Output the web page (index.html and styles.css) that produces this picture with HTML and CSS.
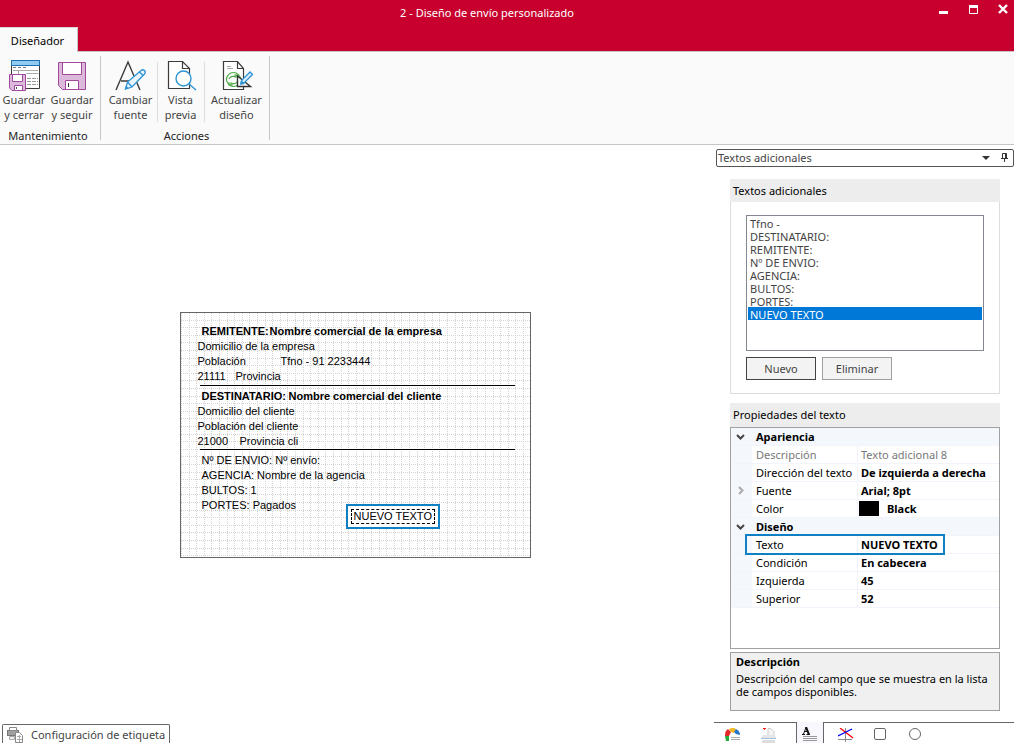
FILE: index.html
```html
<!DOCTYPE html>
<html lang="es">
<head>
<meta charset="utf-8">
<title>2 - Diseño de envío personalizado</title>
<link rel="stylesheet" href="styles.css">
</head>
<body>
<header class="titlebar">
  <h1 class="title">2 - Diseño de envío personalizado</h1>
  <div class="window-buttons">
    <button type="button" aria-label="Minimizar"><svg width="10" height="10"><path d="M0 6h9v3H0z" fill="#fff"/></svg></button>
    <button type="button" aria-label="Maximizar"><svg width="10" height="10"><path d="M.5.5h8v8h-8z" fill="none" stroke="#fff"/><path d="M0 0h9v3H0z" fill="#fff"/></svg></button>
    <button type="button" aria-label="Cerrar"><svg width="10" height="10"><path d="M0 0l8 8M8 0L0 8" stroke="#fff" stroke-width="2.4"/></svg></button>
  </div>
  <button type="button" class="ribbon-tab">Diseñador</button>
</header>

<nav class="ribbon">
  <section class="group">
    <div class="tools">
      <button type="button" class="tool narrow">
        <svg width="32" height="32" viewBox="0 0 32 32"><path d="M3.500 1.500h28v28h-28z" fill="#fff" stroke="#3b3b3b"/><path d="M3.500 1.500h28v5h-28z" fill="#92c9ef" stroke="#1b6fb3"/><path d="M5 8.500h3m2 0h3m2 0h3" stroke="#777"/><path d="M5 11.500h25M10.500 12v4m8-1.500h12" stroke="#aaa"/><path d="M19 19.500h4m1 0h4m1 0h1M19 22.500h4m1 0h4m1 0h1M19 25.500h4m1 0h4m1 0h1" stroke="#999"/><path d="M1.500 15.500h16v16H4l-2.500-2.500z" fill="#dcb9da" stroke="#a04a9e"/><path d="M4.500 15.500h10v7h-10zM6.500 26.500h8v5h-8z" fill="#fff" stroke="#a04a9e"/><path d="M8.500 28v2" stroke="#555"/></svg>
        <span>Guardar<br>y cerrar</span></button>
      <button type="button" class="tool narrow">
        <svg width="32" height="32" viewBox="0 0 32 32"><path d="M2.500 3.500h27v27H6.500l-4-4z" fill="#dcb9da" stroke="#a04a9e"/><path d="M6.500 3.500h19v12h-19zM9.500 21.500h13v9h-13z" fill="#fff" stroke="#a04a9e"/><path d="M12.500 24v4" stroke="#333"/></svg>
        <span>Guardar<br>y seguir</span></button>
    </div>
    <h2 class="group-name">Mantenimiento</h2>
  </section>
  <section class="group">
    <div class="tools">
      <button type="button" class="tool mid">
        <svg width="32" height="32" viewBox="0 0 32 32"><path d="M1 31L13 3 25 31M6 22h16" fill="none" stroke="#3b3b3b" stroke-width="1.400"/><path d="M10.500 30l2-7L26 11.500q2-1.500 3.500 0t0 3.500L17 28zM12.500 23l4.500 5M24.500 13l3.500 3.500" fill="#e8f4fc" stroke="#2e93d4" stroke-width="1.300"/><path d="M10 30.500l1-4 3 3z" fill="#2e93d4"/></svg>
        <span>Cambiar<br>fuente</span></button>
      <button type="button" class="tool short">
        <svg width="32" height="32" viewBox="0 0 32 32"><path d="M3.500 2.500h14l7 7v20h-21z" fill="#fff" stroke="#3b3b3b" stroke-width="1.200"/><path d="M17.500 2.500v7h7" fill="none" stroke="#3b3b3b" stroke-width="1.200"/><circle cx="18.500" cy="19.500" r="7.500" fill="#fff" stroke="#2e93d4" stroke-width="1.400"/><path d="M24 25l7 6" stroke="#2e93d4" stroke-width="1.400"/></svg>
        <span>Vista<br>previa</span></button>
      <button type="button" class="tool wide">
        <svg width="32" height="32" viewBox="0 0 32 32"><path d="M2.500 2.500h14l6 7v21h-20z" fill="#fff" stroke="#3b3b3b" stroke-width="1.200"/><path d="M16.500 2.500v7h6" fill="none" stroke="#3b3b3b" stroke-width="1.200"/><path d="M6 7.500h4M6 9.500h6" stroke="#aaa"/><circle cx="12.500" cy="20.500" r="7" fill="#fff" stroke="#4dab45" stroke-width="1.200"/><path d="M8 20q2-4 7-2v-2.500M17 21q-1 5-7 3v3M8 23v3h4M17 19v-3h-4" fill="none" stroke="#4dab45" stroke-width="1.200"/><path d="M16.500 17v10.500h13z" fill="#fff" stroke="#333" stroke-width="1.400"/><path d="M20 24l1-3 8-8 2.500 2.500-8 8z" fill="#d8edfa" stroke="#2e93d4" stroke-width="1.300"/><path d="M19 26l1-5 4 4z" fill="#2e93d4"/></svg>
        <span>Actualizar<br>diseño</span></button>
    </div>
    <h2 class="group-name">Acciones</h2>
  </section>
</nav>

<main class="workspace">
  <section class="designer">
    <div class="stage">
      <div class="label">
        <svg class="grid" aria-hidden="true"><defs><pattern id="dots" width="38" height="38" patternUnits="userSpaceOnUse"><path d="M8.500 0v38M15.500 0v38M23.500 0v38M30.500 0v38M.5 0v38M0 7.500h38M0 14.500h38M0 22.500h38M0 29.500h38M0 37.500h38" stroke="#d4d4d4" stroke-dasharray="1 1"/></pattern></defs><rect width="100%" height="100%" fill="url(#dots)"/></svg>
        <div class="block first">
          <p class="strong indent"><span class="key-sender">REMITENTE:</span><span>Nombre comercial de la empresa</span></p>
          <p>Domicilio de la empresa</p>
          <p><span class="city">Población</span><span>Tfno - 91 2233444</span></p>
          <p><span class="zip">21111</span><span>Provincia</span></p>
        </div>
        <div class="block">
          <p class="strong indent"><span class="key-receiver">DESTINATARIO:</span><span>Nombre comercial del cliente</span></p>
          <p>Domicilio del cliente</p>
          <p>Población del cliente</p>
          <p><span class="zip-client">21000</span><span>Provincia cli</span></p>
        </div>
        <div class="block last">
          <p class="indent">Nº DE ENVIO: Nº envío:</p>
          <p class="indent">AGENCIA: Nombre de la agencia</p>
          <p class="indent">BULTOS: 1</p>
          <p class="indent">PORTES: Pagados</p>
        </div>
        <div class="new-text"><span>NUEVO TEXTO</span></div>
      </div>
    </div>
    <button type="button" class="config-tab">
      <svg width="17" height="16" viewBox="0 0 17 16"><path d="M0 3h12v6H0z" fill="#777"/><path d="M2.500.5h7v3h-7z" fill="#fff" stroke="#888"/><path d="M1 5h10M1 7h10" stroke="#ccc"/><path d="M8.500 5.500h4l3 3v7h-7z" fill="#fff" stroke="#888"/><path d="M10 9.500h4M10 12.500h5M12.500 8v7" stroke="#aaa"/><path d="M2.500 9.500h5v3h-5z" fill="#eee" stroke="#aaa"/></svg>
      <span>Configuración de etiqueta</span>
    </button>
  </section>

  <aside class="side">
    <div class="side-caption">
      <span>Textos adicionales</span>
      <button type="button" aria-label="Opciones"><svg width="8" height="4"><path d="M0 0h8L4 4z" fill="#333"/></svg></button>
      <button type="button" aria-label="Fijar"><svg width="8" height="9"><path d="M1.500 5V.5h4V5M0 5.500h7M3.500 5v4M4.500 1v4" fill="none" stroke="#333"/></svg></button>
    </div>
    <div class="side-body">
      <section class="card">
        <h2 class="card-title"><label for="texts">Textos adicionales</label></h2>
        <div class="card-body">
          <select id="texts" class="list" size="8">
            <option>Tfno -</option><option>DESTINATARIO:</option><option>REMITENTE:</option><option>Nº DE ENVIO:</option><option>AGENCIA:</option><option>BULTOS:</option><option>PORTES:</option><option selected>NUEVO TEXTO</option>
          </select>
          <div class="actions">
            <button type="button" class="btn primary">Nuevo</button>
            <button type="button" class="btn">Eliminar</button>
          </div>
        </div>
      </section>
      <section class="properties">
        <h2 class="card-title">Propiedades del texto</h2>
        <div class="sheet">
          <table>
            <colgroup><col class="c-mark"><col class="c-name"><col></colgroup>
            <tbody>
              <tr class="cat"><td><svg width="9" height="6"><path d="M1 1l3.500 3.500L8 1"/></svg></td><th colspan="2">Apariencia</th></tr>
              <tr class="off"><td></td><th>Descripción</th><td>Texto adicional 8</td></tr>
              <tr><td></td><th>Dirección del texto</th><td>De izquierda a derecha</td></tr>
              <tr><td><svg class="closed" width="6" height="9"><path d="M1 1l3.500 3.500L1 8"/></svg></td><th>Fuente</th><td>Arial; 8pt</td></tr>
              <tr><td></td><th>Color</th><td><span class="swatch-line"><i class="swatch"></i>Black</span></td></tr>
            </tbody>
            <tbody>
              <tr class="cat"><td><svg width="9" height="6"><path d="M1 1l3.500 3.500L8 1"/></svg></td><th colspan="2">Diseño</th></tr>
              <tr><td></td><th class="current">Texto</th><td>NUEVO TEXTO</td></tr>
              <tr><td></td><th>Condición</th><td>En cabecera</td></tr>
              <tr><td></td><th>Izquierda</th><td>45</td></tr>
              <tr><td></td><th>Superior</th><td>52</td></tr>
            </tbody>
          </table>
        </div>
        <div class="help"><strong>Descripción</strong><p>Descripción del campo que se muestra en la lista de campos disponibles.</p></div>
      </section>
    </div>
    <nav class="side-tabs">
      <button type="button" class="gauge" aria-label="Campos"><svg width="16" height="14" viewBox="0 0 16 14"><path d="M0 8h4v5H1z" fill="#25ad3b"/><path d="M0 7q0-4 3-6l3 3-2 4H0z" fill="#e5292b"/><path d="M4 1q4-2 7 0L9 5 6 4z" fill="#f6b51c"/><path d="M11 1q4 2 4 6l-4-1-2-2z" fill="#2275c7"/><path d="M6 9.500h9M6 11.500h9" stroke="#aaa"/></svg></button>
      <button type="button" class="sheet-tab" aria-label="Imágenes"><svg width="16" height="15" viewBox="0 0 16 15"><path d="M2 .5h3M3 1.500h1" stroke="#e22"/><path d="M7 .5h3l3 3V9H7z" fill="#f4f4f4" stroke="#ccc"/><path d="M2 7h12l1 3H0z" fill="#e6e6e6"/><path d="M0 10.500h15" stroke="#9cc3e6"/><path d="M1 12h13v3H1z" fill="#ddd"/></svg></button>
      <button type="button" class="active" aria-label="Textos"><svg width="15" height="15" viewBox="0 0 15 15"><path d="M0 7.500h3M4.500 7.500H8M1.500 7L4 .5 6.500 7M3 4.500h3" stroke="#111" fill="none"/><path d="M4 0l3 7.500" stroke="#111" stroke-width="2"/><path d="M1 9.500h14M1 11.500h14M1 13.500h14" stroke="#999"/></svg></button>
      <button type="button" class="lines" aria-label="Líneas"><svg width="16" height="15" viewBox="0 0 16 15"><path d="M7.500 0v14M0 11.500h14" stroke="#888"/><path d="M2 0l13 10" stroke="#f00" stroke-width="1.300"/><path d="M0 8l14-7" stroke="#00f" stroke-width="1.300"/></svg></button>
      <button type="button" class="shape" aria-label="Rectángulos"><svg width="12" height="12"><rect x=".5" y=".5" width="11" height="11" rx="1.500" fill="none" stroke="#666"/></svg></button>
      <button type="button" class="shape" aria-label="Elipses"><svg width="12" height="12"><circle cx="6" cy="6" r="5.500" fill="none" stroke="#666"/></svg></button>
    </nav>
  </aside>
</main>
</body>
</html>
```
FILE: styles.css
```css
*, *::after { box-sizing: border-box; }

body {
  margin: 0;
  min-height: 100vh;
  display: flex;
  flex-direction: column;
  background: #fff;
  color: #000;
  font: 11px/15px "Noto Sans", "Open Sans", sans-serif;
}

button, select { font: inherit; color: inherit; }
button { margin: 0; padding: 0; border: 0; background: none; }
h1, h2, p { margin: 0; font-size: inherit; font-weight: normal; }
svg { display: block; }

/* Title bar */
.titlebar {
  display: grid;
  grid-template-columns: 80px 1fr 80px;
  grid-template-rows: 27px 24px;
  background: #c8002d;
  border-bottom: 1px solid #c6c6c6;
}
.title { grid-column: 2; text-align: center; color: #fff; padding-top: 5px; padding-right: 40px; }
.window-buttons { grid-column: 3; display: flex; gap: 20px; justify-content: flex-end; padding: 5px 5px 0 0; }
.window-buttons button { height: 10px; }
.window-buttons svg { overflow: visible; }
.ribbon-tab {
  grid-row: 2;
  grid-column: 1;
  width: 78px;
  margin-bottom: -1px;
  padding-right: 2px;
  background: #fafafa;
  border-top: 1px solid #d8d8d8;
  border-right: 1px solid #c6c6c6;
}

/* Ribbon */
.ribbon {
  display: flex;
  height: 93px;
  padding: 4px 0;
  background: #fafafa;
  border-bottom: 1px solid #c6c6c6;
}
.group { display: flex; flex-direction: column; border-right: 1px solid #c6c6c6; }
.group:first-child { padding-right: 4px; }
.group + .group { padding-left: 3px; }
.tools { display: flex; }
.tool { display: flex; flex-direction: column; align-items: center; height: 71px; padding-top: 3px; color: #444; white-space: nowrap; }
.tool span { margin-top: 1px; }
.narrow { width: 48px; }
.mid { width: 53px; }
.short { width: 47px; }
.wide { width: 65px; }
.group + .group .tool + .tool { background: linear-gradient(#ddd, #ddd) 0 6px / 1px 60px no-repeat; }
.group-name { text-align: center; color: #222; line-height: 14px; padding-top: 2px; }

/* Work area */
.workspace { flex: 1; display: grid; grid-template-columns: 1fr 300px; }
.designer { display: flex; flex-direction: column; }
.stage { flex: 1; display: flex; align-items: center; justify-content: center; padding: 1px 4px 0 0; }
.label {
  position: relative;
  width: 351px;
  height: 246px;
  border: 1px solid #666;
  font: 11px/15px "Liberation Sans", Arial, sans-serif;
}
.grid { position: absolute; inset: 0; width: 100%; height: 100%; }
.block { position: relative; margin: 0 15px 0 19px; padding-top: 3px; border-bottom: 1px solid #000; }
.first { padding-top: 11px; padding-bottom: 1px; }
.last { border: 0; }
.block p { display: flex; margin-left: -2px; white-space: nowrap; }
.block .indent { margin-left: 2px; }
.strong { font-weight: bold; }
.key-sender { width: 68px; }
.key-receiver { width: 87px; }
.city { width: 83px; }
.zip { width: 38px; }
.zip-client { width: 42px; }
.new-text {
  position: absolute;
  left: 165px;
  top: 191px;
  padding: 3px;
  border: 2px solid #0f80c3;
  background: #fff;
}
.new-text span { display: block; padding: 0 2px; border: 1px dashed #000; line-height: 13px; white-space: nowrap; }

.config-tab {
  align-self: flex-start;
  display: flex;
  align-items: center;
  gap: 7px;
  height: 19px;
  margin-left: 2px;
  padding: 1px 4px 0;
  border: 1px solid #666;
  border-bottom: 0;
  border-radius: 2px 2px 0 0;
  color: #444;
}

/* Side panel */
.side { display: flex; flex-direction: column; }
.side-caption {
  display: flex;
  align-items: center;
  gap: 11px;
  height: 18px;
  margin: 4px 0 0 2px;
  padding: 0 4px 1px 1px;
  border: 1px solid #555;
  border-radius: 2px;
  color: #444;
}
.side-caption span { flex: 1; }
.side-body { flex: 1; display: flex; flex-direction: column; gap: 9px; padding: 12px 14px 11px 16px; }
.card { border: 1px solid #ddd; border-top: 0; }
.card-title { background: #ededed; height: 23px; padding: 4px 3px; }
.card .card-title { margin: 0 -1px; }
.card-body { padding: 13px 15px; }
.list {
  display: block;
  width: 100%;
  height: 136px;
  padding: 0 1px;
  border: 1px solid #828790;
  border-radius: 0;
  background: #fff;
  color: #444;
  outline: 0;
  overflow: hidden;
}
.list option { height: 13px; min-height: 13px; padding: 0 2px; line-height: 13px; }
.list option:checked { background: #0078d7 linear-gradient(#0078d7, #0078d7); color: #fff; }
.actions { display: flex; gap: 6px; margin-top: 6px; }
.btn { width: 70px; height: 23px; background: #f3f3f3; border: 1px solid #a0a0a0; color: #444; }
.btn.primary { border-color: #444; }

.properties { flex: 1; display: flex; flex-direction: column; }
.properties .card-title { height: 24px; }
.sheet { flex: 1; border: 1px solid #a0a0a0; }
table { width: 100%; border-collapse: separate; border-spacing: 0; table-layout: fixed; }
.c-mark { width: 21px; }
.c-name { width: 105px; }
td, th { height: 18px; padding: 0 3px; line-height: 17px; text-align: left; font-weight: normal; white-space: nowrap; border-bottom: 1px solid #f1f4fa; }
th { padding-left: 4px; }
td:first-child { background: #f4f7fc; padding: 0 5px; }
th + td { font-weight: bold; border-left: 1px solid #f1f4fa; }
.cat th { background: #f4f7fc; font-weight: bold; }
.off th, .off td { color: #777; font-weight: normal; }
td path { fill: none; stroke: #444; stroke-width: 2; }
td .closed { margin-left: 2px; }
.closed path { stroke: #aaa; }
.swatch-line { display: flex; align-items: center; gap: 8px; margin-left: -2px; }
.swatch { width: 20px; height: 15px; background: #000; }
.current { position: relative; }
.current::after { content: ""; position: absolute; left: -7px; top: -2px; width: 200px; height: 21px; border: 2px solid #0f80c3; }

.help { height: 59px; margin-top: 3px; padding: 1px 5px; border: 1px solid #a0a0a0; background: #f0f0f0; line-height: 13px; }
.help strong { display: block; line-height: 15px; }
.help p { margin-top: 3px; }

.side-tabs { display: flex; height: 21px; }
.side-tabs button { display: flex; justify-content: center; padding-top: 5px; border-top: 1px solid #666; width: 35px; }
.side-tabs .gauge { width: 37px; }
.side-tabs .sheet-tab { width: 45px; padding-right: 10px; }
.side-tabs .active { width: 28px; padding-top: 5px; padding-right: 2px; background: #f7f7fd; border: 1px solid #666; border-width: 0 1px; }
.side-tabs .lines { width: 38px; padding-left: 5px; }
.side-tabs::after { content: ""; flex: 1; border-top: 1px solid #666; }
```
